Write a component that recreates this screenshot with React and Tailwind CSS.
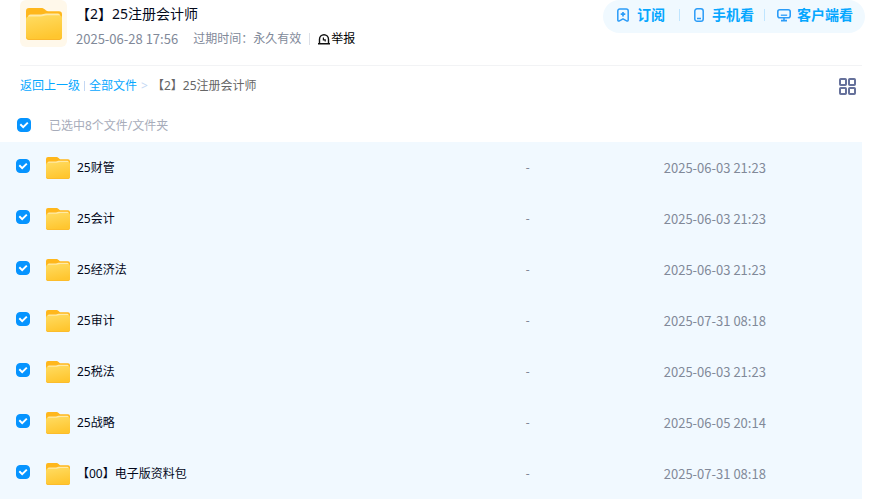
import React, { useState } from "react"

const FILES = [
  { id: 1, name: "25财管", date: "2025-06-03 21:23" },
  { id: 2, name: "25会计", date: "2025-06-03 21:23" },
  { id: 3, name: "25经济法", date: "2025-06-03 21:23" },
  { id: 4, name: "25审计", date: "2025-07-31 08:18" },
  { id: 5, name: "25税法", date: "2025-06-03 21:23" },
  { id: 6, name: "25战略", date: "2025-06-05 20:14" },
  { id: 7, name: "【00】电子版资料包", date: "2025-07-31 08:18" },
]

function FolderIcon({ className }) {
  return (
    <svg viewBox="0 0 36 32" preserveAspectRatio="none" className={className} aria-hidden="true">
      <defs>
        <linearGradient id="folder-front" x1="0" y1="0" x2="0.3" y2="1">
          <stop offset="0" stopColor="#ffdc62" />
          <stop offset="1" stopColor="#ffc62f" />
        </linearGradient>
      </defs>
      <path d="M0 3a3 3 0 0 1 3-3h12c2 0 3 .6 4 1.600l1 .9c.7.5 1.500.8 3 .8h10a3 3 0 0 1 3 3V14H0Z" fill="#ffb71c" />
      <path d="M2 9a2.500 2.500 0 0 1 2.500-2.500H15c2 0 3-1 5-1h12a2 2 0 0 1 2 2V12H2Z" fill="#ffeaa6" />
      <path d="M0 11.500a3 3 0 0 1 3-3h11c3 0 4-1.300 7-1.300h12a3 3 0 0 1 3 3V29a3 3 0 0 1-3 3H3a3 3 0 0 1-3-3Z" fill="url(#folder-front)" />
      <path d="M.5 29.500c.4 1 1.300 2 2.500 2h30c1.200 0 2.100-1 2.500-2" fill="none" stroke="#fbb72a" />
    </svg>
  )
}

function Checkbox({ label, checked, onChange }) {
  return (
    <span className="relative block size-3.5">
      <input
        type="checkbox"
        aria-label={label}
        checked={checked}
        onChange={onChange}
        className="block size-3.5 appearance-none rounded border border-[#c4d8f0] bg-white checked:border-[#0694ff] checked:bg-[#0694ff]"
      />
      {checked && (
        <svg viewBox="0 0 14 14" className="pointer-events-none absolute inset-0 size-3.5" fill="none" stroke="#fff" strokeWidth="2" aria-hidden="true">
          <path d="M3.300 6.300 6.200 9.100 10.800 4.600" />
        </svg>
      )}
    </span>
  )
}

function SubscribeIcon() {
  return (
    <svg viewBox="0 0 12 14" className="h-3.5 w-3" fill="none" stroke="#2b9cf8" strokeWidth="1.5" strokeLinejoin="round" aria-hidden="true">
      <path d="M.8 12V3A2 2 0 0 1 2.800 1h6.400A2 2 0 0 1 11.200 3v9c0 1-.8 1.300-1.600.8L6 10.800l-3.600 2c-.8.5-1.600.2-1.600-.8Z" />
      <path d="M6 4v4.500M3.700 6.200h4.600" strokeWidth="1.700" />
    </svg>
  )
}

function PhoneIcon() {
  return (
    <svg viewBox="0 0 10 14" className="h-3.5 w-2.5" fill="none" stroke="#2b9cf8" strokeWidth="1.5" aria-hidden="true">
      <rect x="0.800" y="0.800" width="8.400" height="12.400" rx="2.300" />
      <path d="M3 10.500h4" />
    </svg>
  )
}

function MonitorIcon() {
  return (
    <svg viewBox="0 0 14 14" className="size-3.5" fill="none" stroke="#2b9cf8" strokeWidth="1.6" aria-hidden="true">
      <rect x="0.800" y="1.800" width="12.400" height="8" rx="2" />
      <path d="M3.800 7.200h6.400" strokeWidth="1.300" />
      <path d="M7 9.800V12M4 12.600h6" />
    </svg>
  )
}

function ReportIcon() {
  return (
    <svg viewBox="0 0 12 11" className="h-[11px] w-3" fill="none" stroke="#111" strokeWidth="1.4" aria-hidden="true">
      <path d="M1.500 9V5.200a4.500 4.500 0 0 1 9 0V9M0 9.700h12" />
      <path d="M5.400 3.600v2.200h1.800v1.700" strokeWidth="1.200" />
    </svg>
  )
}

function GridIcon() {
  return (
    <svg viewBox="0 0 17 17" className="size-[17px]" fill="none" stroke="#66719b" strokeWidth="2" aria-hidden="true">
      <rect x="1" y="1" width="6" height="6" rx="0.800" />
      <rect x="10" y="1" width="6" height="6" rx="0.800" />
      <rect x="1" y="10" width="6" height="6" rx="0.800" />
      <rect x="10" y="10" width="6" height="6" rx="0.800" />
    </svg>
  )
}

export default function App() {
  const [selected, setSelected] = useState(FILES.map((f) => f.id))

  const allSelected = selected.length === FILES.length

  const toggle = (id) => {
    setSelected(selected.includes(id) ? selected.filter((s) => s !== id) : [...selected, id])
  }

  const toggleAll = () => {
    setSelected(allSelected ? [] : FILES.map((f) => f.id))
  }

  return (
    <div className="bg-white font-['Noto_Sans','Noto_Sans_CJK_SC',sans-serif] text-xs text-[#03081a]">
      {/* Header */}
      <header className="ml-5 flex items-start justify-between pr-[7px]">
        <div className="flex gap-2">
          <div className="flex size-[47px] items-center justify-center rounded-md bg-[#fff8ea]">
            <FolderIcon className="h-8 w-9" />
          </div>
          <div className="pt-1 pl-px">
            <h1 className="text-sm leading-5">【2】25注册会计师</h1>
            <div className="mt-[5px] flex items-center leading-5 text-[#818999]">
              <span className="font-['Noto_Sans_CJK_SC',sans-serif] text-[13px]">2025-06-28 17:56</span>
              <span className="ml-[15px]">过期时间：永久有效</span>
              <span className="ml-2 h-3 w-px bg-[#dcdfe6]" />
              <button className="ml-2 flex items-center gap-px text-black">
                <ReportIcon />
                举报
              </button>
            </div>
          </div>
        </div>

        <div className="flex h-[33px] items-center rounded-full bg-[#f0f9ff] px-3 pb-[3px] text-sm font-bold text-[#06a7ff]">
          <button className="flex items-center gap-2 px-0.5">
            <SubscribeIcon />
            订阅
          </button>
          <span className="mx-3 h-3 w-px bg-[#bfe5ff]" />
          <button className="flex items-center gap-2 px-0.5">
            <PhoneIcon />
            手机看
          </button>
          <span className="mr-3 ml-2 h-3 w-px bg-[#bfe5ff]" />
          <button className="flex items-center gap-1.5">
            <MonitorIcon />
            客户端看
          </button>
        </div>
      </header>

      {/* Breadcrumb */}
      <div className="mt-4 mr-2.5 ml-5 flex h-[43px] items-center justify-between border-t border-[#f2f3f5] pb-[2px]">
        <nav className="flex items-center text-[#06a7ff]">
          <a href="#back">返回上一级</a>
          <span className="mx-1 h-2.5 w-px bg-[#c4d8f4]" />
          <a href="#all">全部文件</a>
          <span className="mx-1 text-[#c4d8f4]">&gt;</span>
          <span className="text-[#666]">【2】25注册会计师</span>
        </nav>
        <button aria-label="切换视图" className="mr-1.5">
          <GridIcon />
        </button>
      </div>

      {/* File list */}
      <div className="pr-2.5">
        <table className="w-full table-fixed text-left">
          <colgroup>
            <col className="w-[46px]" />
            <col />
            <col className="w-[16%]" />
            <col className="w-[23%]" />
          </colgroup>
          <thead>
            <tr className="h-[34px]">
              <th className="pl-[17px]">
                <Checkbox label="全选" checked={allSelected} onChange={toggleAll} />
              </th>
              <th colSpan={3} className="pl-[3px] pt-px font-normal text-[#a7acba]">已选中8个文件/文件夹</th>
            </tr>
          </thead>
          <tbody>
            {FILES.map((file) => (
              <tr key={file.id} className="h-[51px] bg-[#f1f9ff]">
                <td className="pb-1 pl-4">
                  <Checkbox label={file.name} checked={selected.includes(file.id)} onChange={() => toggle(file.id)} />
                </td>
                <td>
                  <div className="flex items-center gap-[7px]">
                    <FolderIcon className="h-[22px] w-6" />
                    <a href="#folder">{file.name}</a>
                  </div>
                </td>
                <td className="text-[#818999]">-</td>
                <td className="font-['Noto_Sans_CJK_SC',sans-serif] text-[13px] text-[#818999]">{file.date}</td>
              </tr>
            ))}
          </tbody>
        </table>
      </div>
    </div>
  )
}
